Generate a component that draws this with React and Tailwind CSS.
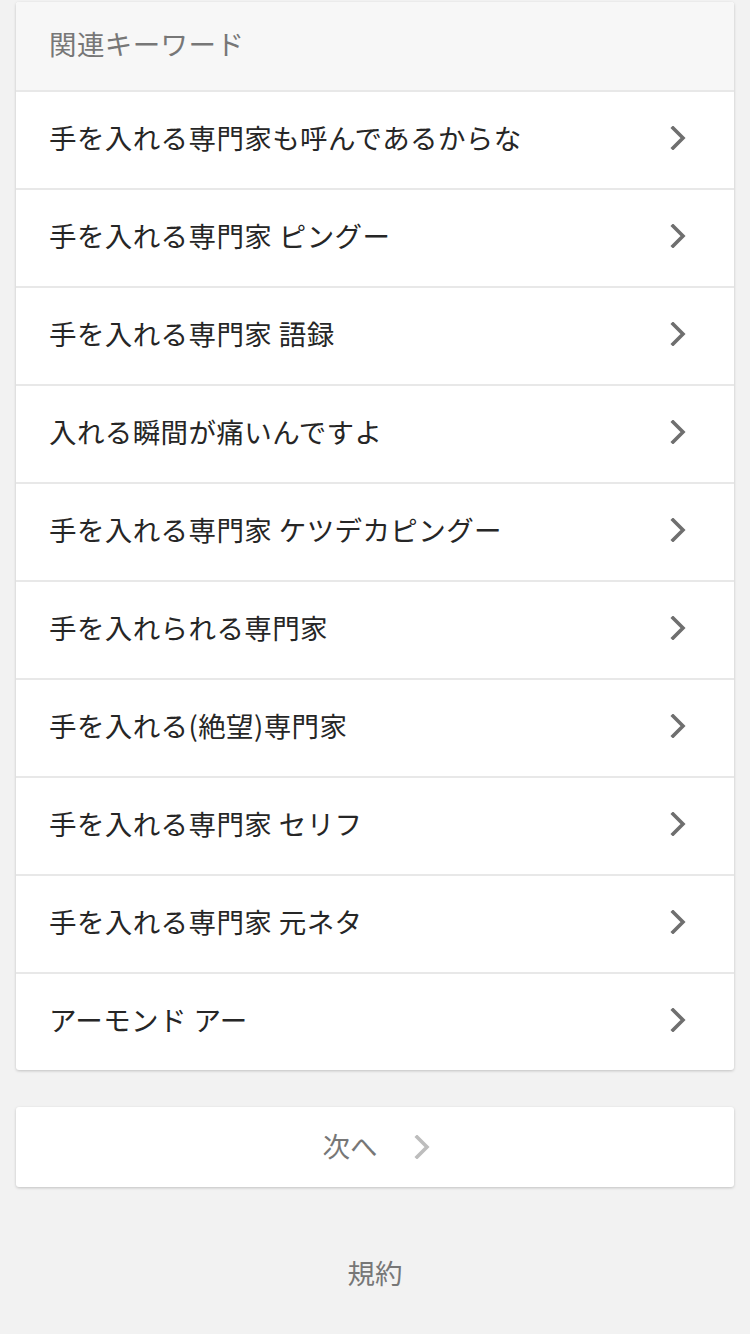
const keywords = [
  "手を入れる専門家も呼んであるからな",
  "手を入れる専門家 ピングー",
  "手を入れる専門家 語録",
  "入れる瞬間が痛いんですよ",
  "手を入れる専門家 ケツデカピングー",
  "手を入れられる専門家",
  "手を入れる(絶望)専門家",
  "手を入れる専門家 セリフ",
  "手を入れる専門家 元ネタ",
  "アーモンド アー",
];

function Chevron({ className }) {
  return (
    <svg viewBox="0 0 16 24" className={className} fill="none">
      <path d="M3 2 L13 12 L3 22" stroke="currentColor" strokeWidth="3.6" strokeLinecap="square" />
    </svg>
  );
}

export default function App() {
  return (
    <div
      className="min-h-[1334px] bg-[#f2f2f2] px-4 pt-[2px]"
      style={{ fontFamily: '"Noto Sans CJK JP", "Noto Sans", sans-serif' }}
    >
      <section className="overflow-hidden rounded-[3px] bg-white shadow-[0_1px_3px_rgba(0,0,0,0.2)]">
        <h2 className="flex h-[88px] items-center bg-[#f7f7f7] pb-[4px] pl-[33px] text-[27.5px] font-normal tracking-[0.4px] text-[#777]">
          関連キーワード
        </h2>
        {keywords.map((k) => (
          <a
            key={k}
            href="#"
            className="flex h-[98px] items-center justify-between border-t-2 border-[#e8e8e8] pb-[4px] pl-[33px] pr-[48px] text-[27.5px] tracking-[0.4px] text-[#262626]"
          >
            <span>{k}</span>
            <Chevron className="h-[24px] w-[16px] text-[#6f6f6f]" />
          </a>
        ))}
      </section>

      <a
        href="#"
        className="mt-[37px] flex h-[80px] items-center justify-center gap-[36px] rounded-[3px] bg-white pl-[2px] text-[27.5px] text-[#777] shadow-[0_1px_3px_rgba(0,0,0,0.2)]"
      >
        <span className="pb-[3px]">次へ</span>
        <Chevron className="h-[24px] w-[16px] text-[#bdbdbd]" />
      </a>

      <footer className="flex h-[180px] items-center justify-center pb-[8px] text-[27.5px] text-[#777]">
        規約
      </footer>
    </div>
  );
}
